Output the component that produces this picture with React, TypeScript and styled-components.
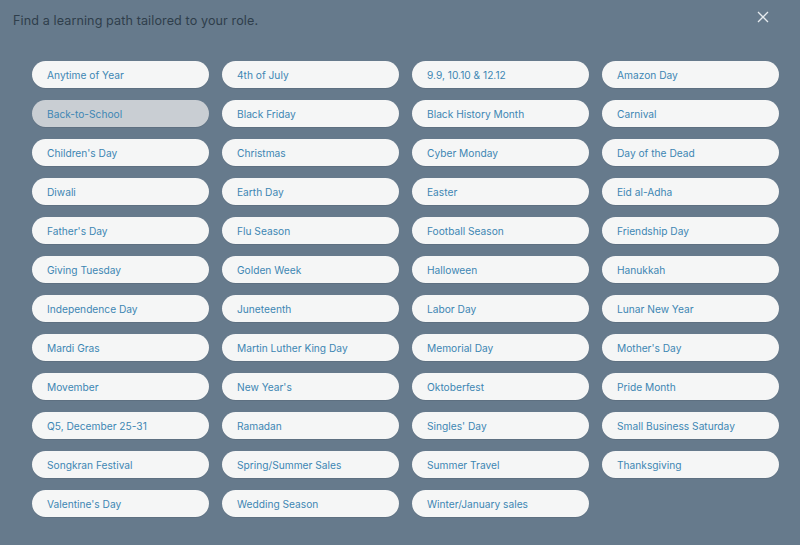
import styled, { createGlobalStyle } from "styled-components";

const GlobalStyle = createGlobalStyle`
    html, body {
        margin: 0;
        padding: 0;
        background: #667a8c;
    }
    * {
        box-sizing: border-box;
    }
`;

const Overlay = styled.div`
    width: 800px;
    height: 545px;
    background: #667a8c;
    font-family: "Inter", "Noto Sans", sans-serif;
    padding: 0 30px 0 13px;
    display: flex;
    flex-direction: column;
`;

const TopBar = styled.div`
    display: flex;
    justify-content: space-between;
    align-items: center;
    height: 38px;
    padding-top: 3px;
`;

const Title = styled.h1`
    margin: 0;
    font-size: 12.6px;
    font-weight: 400;
    color: #2f3e4b;
    letter-spacing: 0.1px;
`;

const CloseBtn = styled.button`
    background: none;
    border: none;
    padding: 0;
    width: 14px;
    height: 14px;
    margin-top: -8px;
    cursor: pointer;
    display: flex;
`;

const Grid = styled.div`
    display: grid;
    grid-template-columns: repeat(4, 177px);
    column-gap: 13px;
    row-gap: 12px;
    margin-top: 23px;
    padding-left: 19px;
`;

const Chip = styled.button<{ $active?: boolean }>`
    height: 27px;
    border: none;
    border-radius: 14px;
    background: ${(p) => (p.$active ? "#c9ced3" : "#f5f6f6")};
    color: #3d86b3;
    font-family: inherit;
    font-size: 10.2px;
    text-align: left;
    padding: 0 0 0 15px;
    cursor: pointer;
    box-shadow: 0 1px 0 rgba(0, 0, 0, 0.08);
    white-space: nowrap;
`;

const items = [
    "Anytime of Year", "4th of July", "9.9, 10.10 & 12.12", "Amazon Day",
    "Back-to-School", "Black Friday", "Black History Month", "Carnival",
    "Children's Day", "Christmas", "Cyber Monday", "Day of the Dead",
    "Diwali", "Earth Day", "Easter", "Eid al-Adha",
    "Father's Day", "Flu Season", "Football Season", "Friendship Day",
    "Giving Tuesday", "Golden Week", "Halloween", "Hanukkah",
    "Independence Day", "Juneteenth", "Labor Day", "Lunar New Year",
    "Mardi Gras", "Martin Luther King Day", "Memorial Day", "Mother's Day",
    "Movember", "New Year's", "Oktoberfest", "Pride Month",
    "Q5, December 25-31", "Ramadan", "Singles' Day", "Small Business Saturday",
    "Songkran Festival", "Spring/Summer Sales", "Summer Travel", "Thanksgiving",
    "Valentine's Day", "Wedding Season", "Winter/January sales",
];

const App = () => {
    return (
        <>
            <GlobalStyle />
            <Overlay>
                <TopBar>
                    <Title>Find a learning path tailored to your role.</Title>
                    <CloseBtn aria-label="Close">
                        <svg width="14" height="14" viewBox="0 0 14 14">
                            <path d="M2 2 L12 12 M12 2 L2 12" stroke="#e6ebef" strokeWidth="1.3" fill="none" />
                        </svg>
                    </CloseBtn>
                </TopBar>
                <Grid>
                    {items.map((label) => (
                        <Chip key={label} $active={label === "Back-to-School"}>{label}</Chip>
                    ))}
                </Grid>
            </Overlay>
        </>
    );
};

export default App;
